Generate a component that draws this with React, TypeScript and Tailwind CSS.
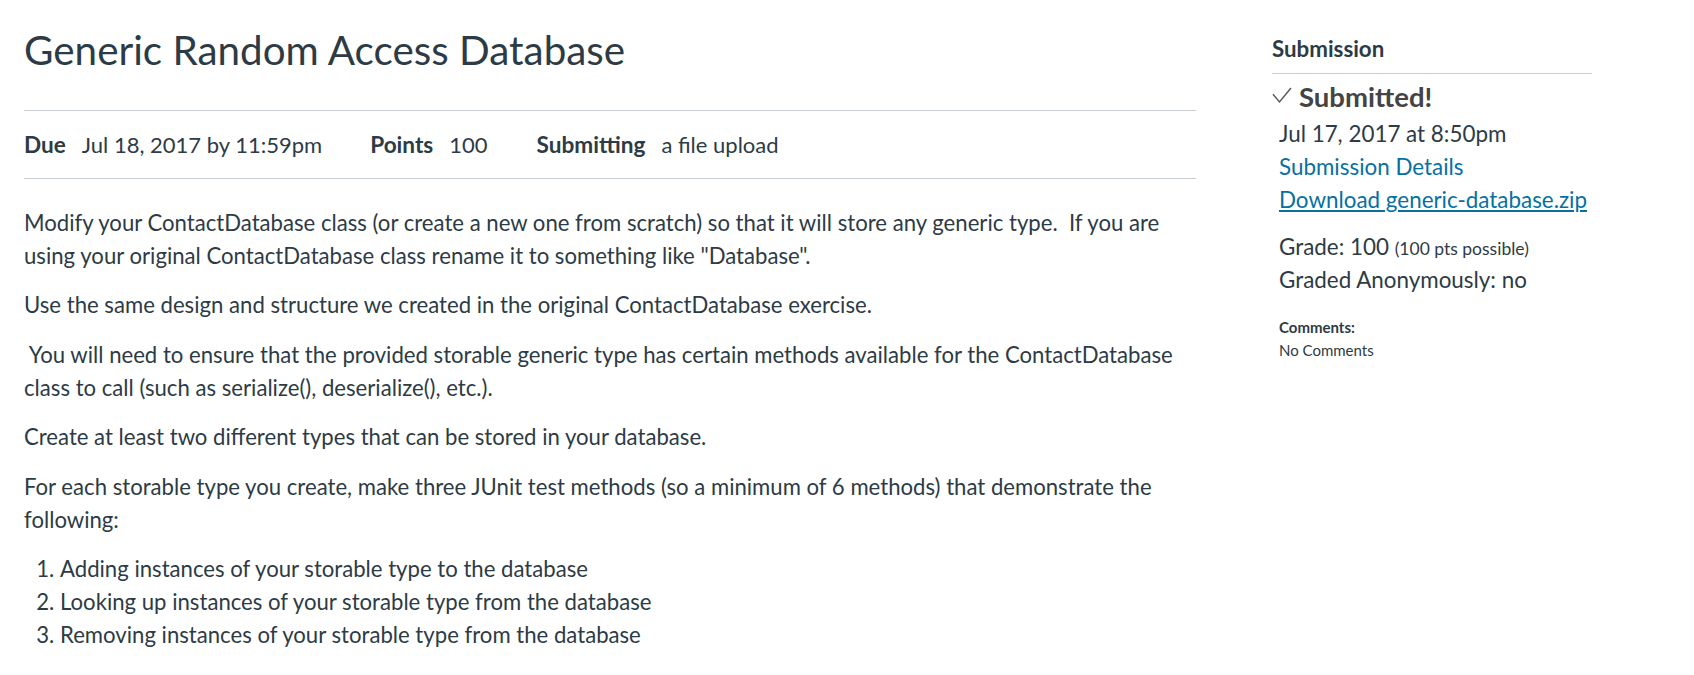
import React from "react";

export default function App() {
  return (
    <div className="flex px-[24px] font-['Lato',sans-serif] text-[#2d3b45] bg-white min-h-[675px]">
      <main className="w-[1172px] shrink-0">
        <h1 className="mt-[26px] text-[40.4px] leading-[48px] font-normal">Generic Random Access Database</h1>
        <div className="mt-[36px] border-y border-[#c7cdd1] pt-[17px] pb-[17px] flex text-[22px] leading-[33px]">
          <div>
            <span className="font-bold text-[22.6px] mr-[16px]">Due</span>
            <span>Jul 18, 2017 by 11:59pm</span>
          </div>
          <div className="ml-[48px]">
            <span className="font-bold text-[22.6px] mr-[16px]">Points</span>
            <span>100</span>
          </div>
          <div className="ml-[49px]">
            <span className="font-bold text-[22.6px] mr-[16px]">Submitting</span>
            <span>a file upload</span>
          </div>
        </div>
        <div className="mt-[26.5px] text-[22.15px] leading-[33px]">
          <p className="mb-[16.5px]">
            Modify your ContactDatabase class (or create a new one from scratch) so that it will store any generic type.{"\u00a0 "}If you are using your original ContactDatabase class rename it to something like "Database".
          </p>
          <p className="mb-[16.5px]">Use the same design and structure we created in the original ContactDatabase exercise.</p>
          <p className="mb-[16.5px]">
            {"\u00a0"}You will need to ensure that the provided storable generic type has certain methods available for the ContactDatabase class to call (such as serialize(), deserialize(), etc.).
          </p>
          <p className="mb-[16.5px]">Create at least two different types that can be stored in your database.</p>
          <p className="mb-[16.5px]">
            For each storable type you create, make three JUnit test methods (so a minimum of 6 methods) that demonstrate the following:
          </p>
          <ol className="list-decimal pl-[36px]">
            <li>Adding instances of your storable type to the database</li>
            <li>Looking up instances of your storable type from the database</li>
            <li>Removing instances of your storable type from the database</li>
          </ol>
        </div>
      </main>
      <aside className="ml-[76px] w-[320px] shrink-0">
        <h2 className="mt-[33px] text-[22.3px] leading-[31px] font-bold pb-[9px] border-b border-[#c7cdd1]">Submission</h2>
        <div className="mt-[5px] flex items-center text-[#444444]">
          <svg width="20" height="36" viewBox="0 0 20 36" className="shrink-0">
            <polyline points="1,15.3 7.5,23 19,9" fill="none" stroke="#555" strokeWidth="1.4" />
          </svg>
          <span className="ml-[7px] text-[27.5px] leading-[36px] font-bold">Submitted!</span>
        </div>
        <div className="pl-[7px] text-[22.4px] leading-[33px]">
          <div className="mt-[2px]">Jul 17, 2017 at 8:50pm</div>
          <div className="text-[#0770a3]">Submission Details</div>
          <div className="text-[#0770a3] underline">Download generic-database.zip</div>
          <div className="mt-[14px]">
            Grade: 100 <span className="text-[17.5px] leading-none">(100 pts possible)</span>
          </div>
          <div>Graded Anonymously: no</div>
          <div className="mt-[20px] text-[15px] leading-[22.5px]">
            <div className="font-bold">Comments:</div>
            <div>No Comments</div>
          </div>
        </div>
      </aside>
    </div>
  );
}
